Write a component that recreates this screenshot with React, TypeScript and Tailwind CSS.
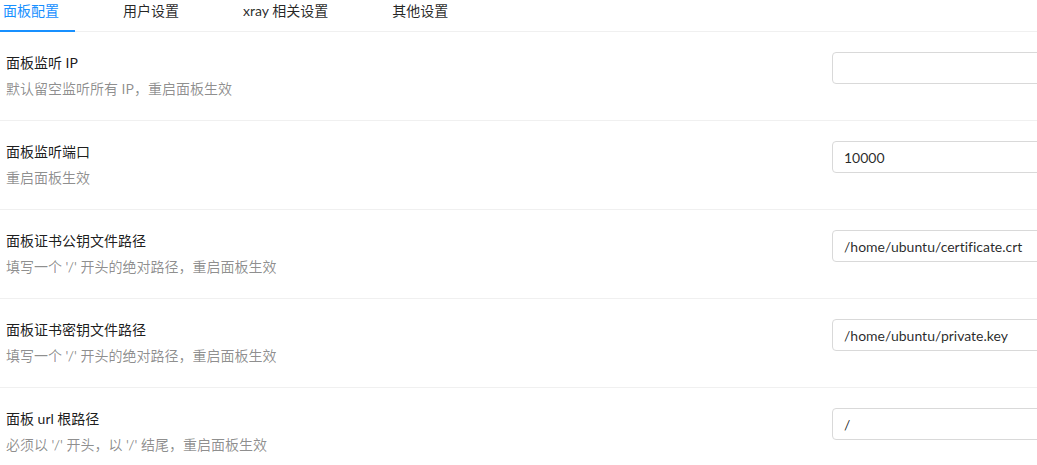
const tabs = ["面板配置", "用户设置", "xray 相关设置", "其他设置"];

type Setting = {
  title: string;
  desc: string;
  value: string;
};

const settings: Setting[] = [
  { title: "面板监听 IP", desc: "默认留空监听所有 IP，重启面板生效", value: "" },
  { title: "面板监听端口", desc: "重启面板生效", value: "10000" },
  { title: "面板证书公钥文件路径", desc: "填写一个 '/' 开头的绝对路径，重启面板生效", value: "/home/ubuntu/certificate.crt" },
  { title: "面板证书密钥文件路径", desc: "填写一个 '/' 开头的绝对路径，重启面板生效", value: "/home/ubuntu/private.key" },
  { title: "面板 url 根路径", desc: "必须以 '/' 开头，以 '/' 结尾，重启面板生效", value: "/" },
];

function SettingRow({ item }: { item: Setting }) {
  return (
    <div className="flex items-start border-b border-[#f0f0f0] py-[20px] pl-[6px]">
      <div className="flex-1">
        <div className="text-[14px] leading-[22px] text-black/90">{item.title}</div>
        <div className="mt-[4px] text-[14px] leading-[22px] text-black/45">{item.desc}</div>
      </div>
      <div className="w-[268px] shrink-0">
        <input
          readOnly
          value={item.value}
          className="h-[32px] w-full rounded-[4px] border border-[#d9d9d9] bg-white px-[11px] text-[14px] text-black/85 outline-none [font-variant-ligatures:none]"
        />
      </div>
    </div>
  );
}

export default function App() {
  return (
    <div
      className="h-[465px] w-[1037px] overflow-hidden bg-white [font-variant-ligatures:none]"
      style={{ fontFamily: 'Lato, "Noto Sans CJK SC", sans-serif' }}
    >
      <div className="w-[1100px]">
        {/* tab bar */}
        <div className="flex border-b border-[#f0f0f0] pl-[3px]">
          {tabs.map((t, i) => (
            <div
              key={t}
              className={[
                "relative -mb-px mr-[64px] pb-[10px] text-[14px] leading-[22px]",
                i === 0 ? "text-[#1890ff]" : "text-black/85",
              ].join(" ")}
            >
              {t}
              {i === 0 && (
                <span className="absolute bottom-0 left-[-3px] right-[-16px] h-[2px] bg-[#1890ff]" />
              )}
            </div>
          ))}
        </div>

        {/* settings list */}
        <div>
          {settings.map((s) => (
            <SettingRow key={s.title} item={s} />
          ))}
        </div>
      </div>
    </div>
  );
}
